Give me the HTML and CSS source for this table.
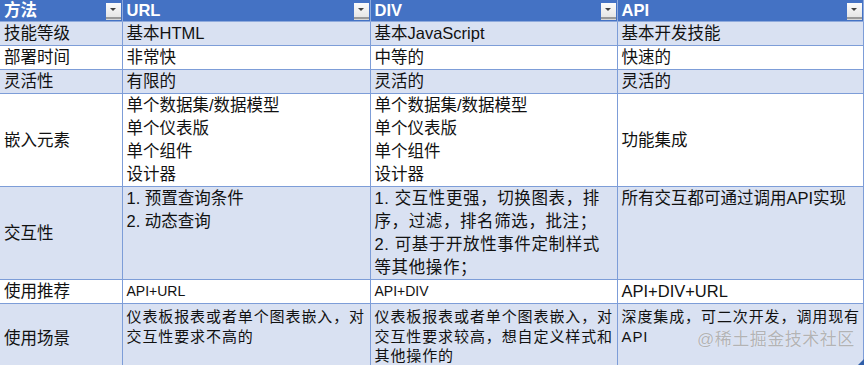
FILE: index.html
```html
<!DOCTYPE html>
<html lang="zh-CN">
<head>
<meta charset="utf-8">
<title>嵌入方式对比</title>
<link rel="stylesheet" href="styles.css">
</head>
<body>
<div class="sheet">
  <table class="grid">
    <colgroup>
      <col class="c1"><col class="c2"><col class="c3"><col class="c4">
    </colgroup>
    <thead>
      <tr class="head">
        <th><div class="hcell"><span>方法</span><span class="dd"><svg width="8" height="5" viewBox="0 0 8 5"><path d="M1 1h6L4 4z" fill="#404040"/></svg></span></div></th>
        <th><div class="hcell"><span>URL</span><span class="dd"><svg width="8" height="5" viewBox="0 0 8 5"><path d="M1 1h6L4 4z" fill="#404040"/></svg></span></div></th>
        <th><div class="hcell"><span>DIV</span><span class="dd"><svg width="8" height="5" viewBox="0 0 8 5"><path d="M1 1h6L4 4z" fill="#404040"/></svg></span></div></th>
        <th><div class="hcell"><span>API</span><span class="dd"><svg width="8" height="5" viewBox="0 0 8 5"><path d="M1 1h6L4 4z" fill="#404040"/></svg></span></div></th>
      </tr>
    </thead>
    <tbody>
      <tr class="r24 band">
        <td>技能等级</td><td>基本HTML</td><td>基本JavaScript</td><td>基本开发技能</td>
      </tr>
      <tr class="r24">
        <td>部署时间</td><td>非常快</td><td>中等的</td><td>快速的</td>
      </tr>
      <tr class="r24 band">
        <td>灵活性</td><td>有限的</td><td>灵活的</td><td>灵活的</td>
      </tr>
      <tr class="r92">
        <td class="mid">嵌入元素</td>
        <td class="top">单个数据集/数据模型<br>单个仪表版<br>单个组件<br>设计器</td>
        <td class="top">单个数据集/数据模型<br>单个仪表版<br>单个组件<br>设计器</td>
        <td class="mid">功能集成</td>
      </tr>
      <tr class="r92 band">
        <td class="mid">交互性</td>
        <td class="top">1. 预置查询条件<br>2. 动态查询</td>
        <td class="top spread">1. 交互性更强，切换图表，排<br>序，过滤，排名筛选，批注；<br>2. 可基于开放性事件定制样式<br>等其他操作；</td>
        <td class="top">所有交互都可通过调用API实现</td>
      </tr>
      <tr class="r24">
        <td>使用推荐</td>
        <td class="small">API+URL</td>
        <td class="small">API+DIV</td>
        <td>API+DIV+URL</td>
      </tr>
      <tr class="rlast band">
        <td class="mid">使用场景</td>
        <td class="top scene">仪表板报表或者单个图表嵌入，对<br>交互性要求不高的</td>
        <td class="top scene">仪表板报表或者单个图表嵌入，对<br>交互性要求较高，想自定义样式和<br>其他操作的</td>
        <td class="top scene">深度集成，可二次开发，调用现有<br>API</td>
      </tr>
    </tbody>
  </table>
  <div class="watermark">@稀土掘金技术社区</div>
  <div class="handle"></div>
</div>
</body>
</html>
```

FILE: styles.css
```css
html, body {
  margin: 0;
  padding: 0;
  background: #ffffff;
}
body {
  width: 865px;
  height: 365px;
  overflow: hidden;
  font-family: "Liberation Sans", "Noto Sans CJK SC", sans-serif;
  color: #111111;
}
.sheet {
  position: relative;
  width: 865px;
  height: 365px;
}
.grid {
  border-collapse: collapse;
  table-layout: fixed;
  width: 863px;
}
.c1 { width: 122px; }
.c2 { width: 248px; }
.c3 { width: 247px; }
.c4 { width: 246px; }

.grid th, .grid td {
  border: 1px solid #7d9dd8;
  padding: 0 4px;
  font-size: 16.5px;
  line-height: 23px;
  font-weight: normal;
  text-align: left;
  vertical-align: middle;
  overflow: hidden;
  white-space: nowrap;
}
.head th {
  background: #4472c4;
  color: #ffffff;
  font-weight: bold;
  height: 21px;
  line-height: 21px;
  border-color: #8faadc;
  border-top: none;
  padding: 0 1px 0 4px;
}
.grid th:first-child, .grid td:first-child { border-left: none; }
.hcell {
  display: flex;
  align-items: center;
  justify-content: space-between;
}
.dd {
  width: 15px;
  height: 14px;
  display: flex;
  align-items: center;
  justify-content: center;
  background: linear-gradient(#fbfbfb, #e6e6e6);
  border-bottom: 2px solid #9a9a9a;
  box-shadow: 0 1px 0 #d8d8d8;
}
.band td { background: #d9e1f2; }
.r24 td { height: 23px; }
.r92 td { height: 91px; }
.rlast td { height: 66px; }
.top { vertical-align: top !important; }
.mid { vertical-align: middle; }
.spread { letter-spacing: 0.6px; }
.small { font-size: 14px !important; }
.scene {
  font-size: 15px !important;
  letter-spacing: 0.9px;
  line-height: 19.5px !important;
  padding-top: 3px !important;
}
.watermark {
  position: absolute;
  left: 697px;
  top: 329px;
  font-size: 17px;
  line-height: 22px;
  color: rgba(150, 150, 150, 0.7);
  letter-spacing: 0.5px;
  text-shadow: 0 0 1px rgba(255,255,255,0.8);
}
.handle {
  position: absolute;
  left: 858px;
  top: 359px;
  width: 0;
  height: 0;
  border-left: 6px solid transparent;
  border-bottom: 6px solid #2f5ea8;
}
```
